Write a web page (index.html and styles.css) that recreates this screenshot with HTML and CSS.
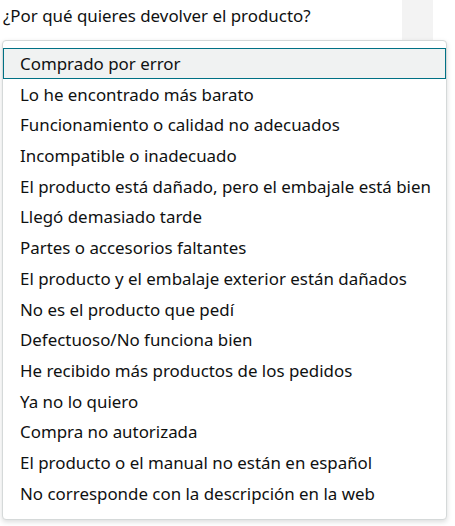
FILE: index.html
```html
<!DOCTYPE html>
<html lang="es">
<head>
  <meta charset="UTF-8" />
  <title>Devolver producto</title>
  <link rel="stylesheet" href="styles.css">
</head>
<body>

<div class="page">
  <div class="main">
    <h2 class="question">¿Por qué quieres devolver el producto?</h2>
  </div>
  <div class="side"></div>
</div>

<ul class="reason-menu">
  <li class="selected">Comprado por error</li>
  <li>Lo he encontrado más barato</li>
  <li>Funcionamiento o calidad no adecuados</li>
  <li>Incompatible o inadecuado</li>
  <li>El producto está dañado, pero el embajale está bien</li>
  <li>Llegó demasiado tarde</li>
  <li>Partes o accesorios faltantes</li>
  <li>El producto y el embalaje exterior están dañados</li>
  <li>No es el producto que pedí</li>
  <li>Defectuoso/No funciona bien</li>
  <li>He recibido más productos de los pedidos</li>
  <li>Ya no lo quiero</li>
  <li>Compra no autorizada</li>
  <li>El producto o el manual no están en español</li>
  <li>No corresponde con la descripción en la web</li>
</ul>

</body>
</html>
```

FILE: styles.css
```css
* {
  box-sizing: border-box;
  margin: 0;
  padding: 0;
}

body {
  font-family: 'Noto Sans', 'Open Sans', Arial, sans-serif;
  color: #0f1111;
  background: #fff;
  position: relative;
  height: 526px;
  overflow: hidden;
}

.page {
  display: flex;
  height: 526px;
}

.main {
  width: 402px;
}

.question {
  font-size: 16.9px;
  font-weight: normal;
  line-height: 24px;
  padding: 4px 0 0 3px;
  color: #0f1111;
}

.side {
  width: 31px;
  height: 40px;
  background: #f3f3f3;
}

.reason-menu {
  position: absolute;
  top: 40px;
  left: 2px;
  width: 445px;
  height: 480px;
  list-style: none;
  background: #fff;
  border: 1px solid #d5d9d9;
  border-radius: 4px;
  box-shadow: 0 2px 5px rgba(15, 17, 17, 0.15);
  padding: 7px 0;
}

.reason-menu li {
  font-size: 16.9px;
  line-height: 28.7px;
  height: 30.7px;
  padding: 1px 16px;
  border: 1px solid transparent;
  white-space: nowrap;
}

.reason-menu li.selected {
  background: #f0f2f2;
  border-color: #007185;
}
```
